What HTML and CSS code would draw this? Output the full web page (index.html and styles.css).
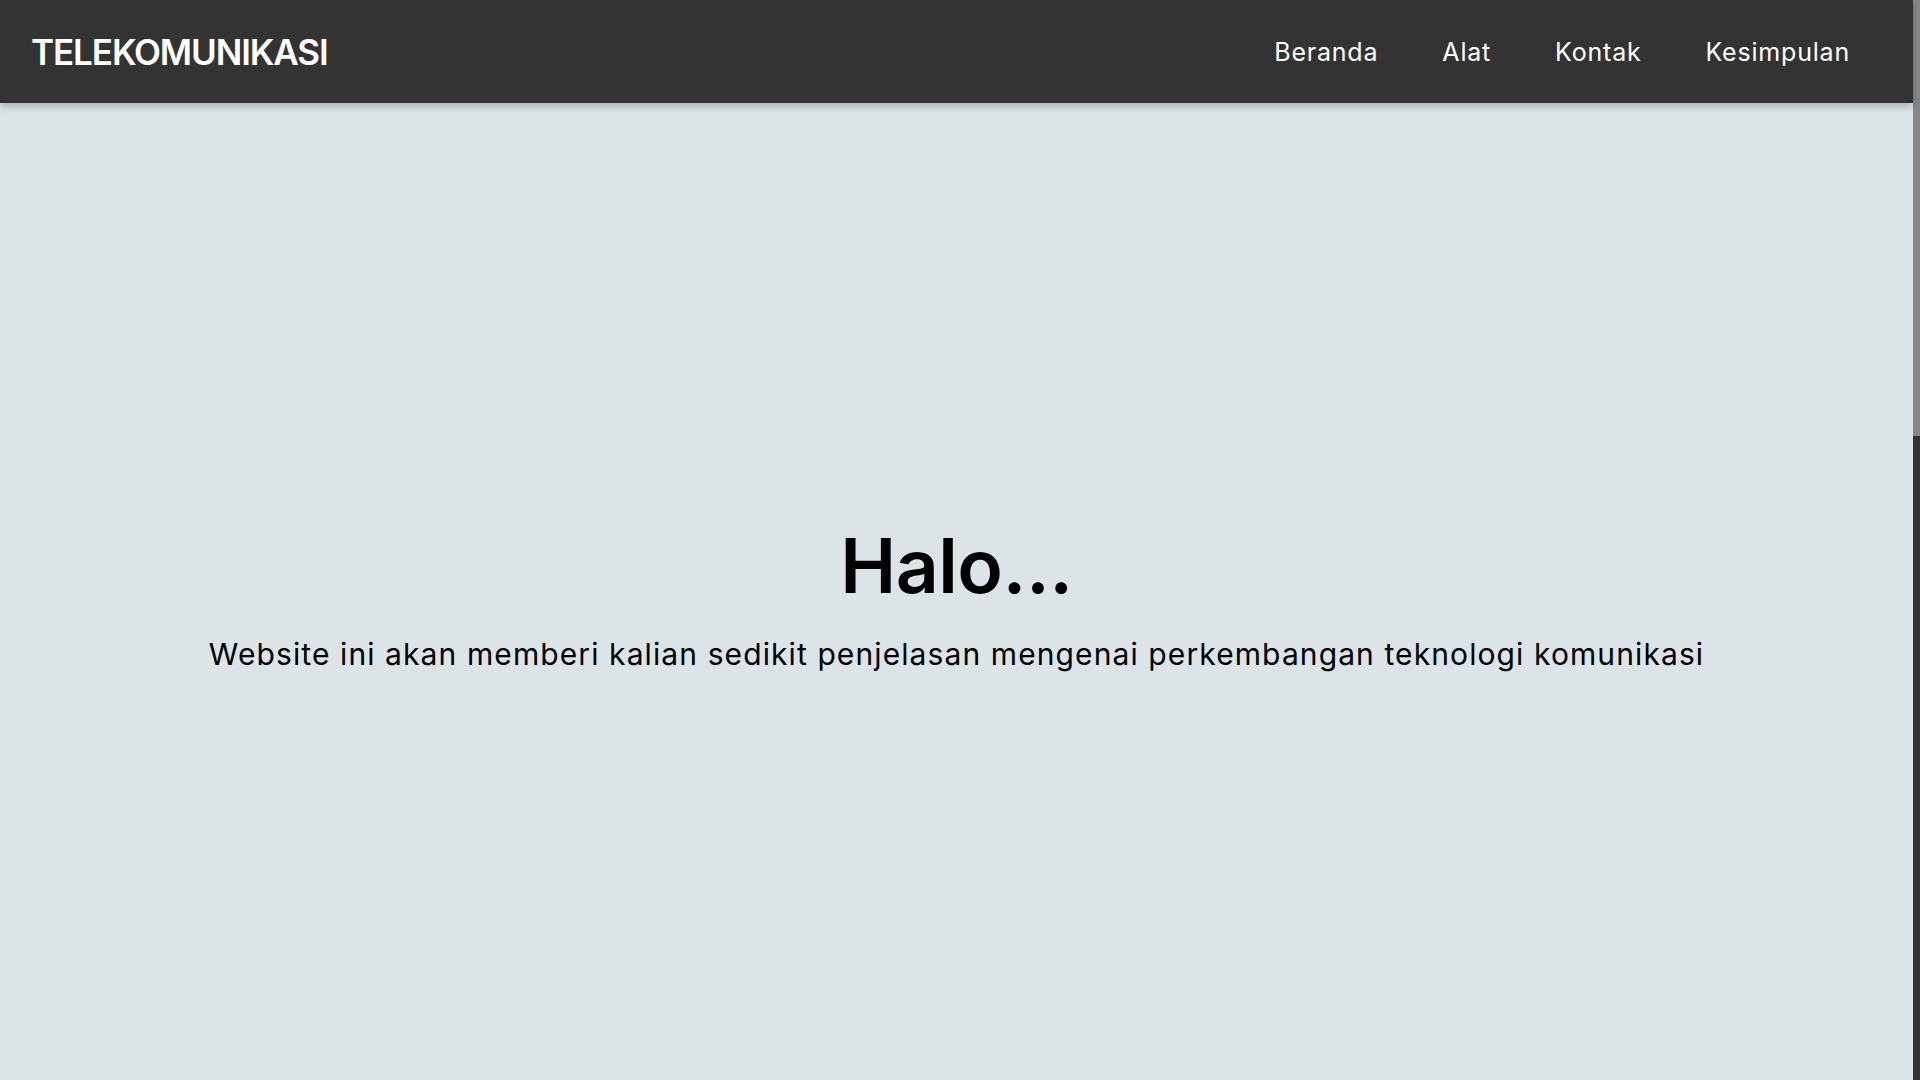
FILE: index.html
```html
<!DOCTYPE html>
<html lang="id">
<head>
<meta charset="utf-8">
<title>Telekomunikasi</title>
<link rel="stylesheet" href="styles.css">
</head>
<body>
<div class="page">
  <header class="navbar">
    <div class="logo">TELEKOMUNIKASI</div>
    <nav class="menu">
      <a href="#beranda">Beranda</a>
      <a href="#alat">Alat</a>
      <a href="#kontak">Kontak</a>
      <a href="#kesimpulan">Kesimpulan</a>
    </nav>
  </header>
  <main class="content">
    <section class="hero" id="beranda">
      <h1 class="hero-title">Halo...</h1>
      <p class="hero-text">Website ini akan memberi kalian sedikit penjelasan mengenai perkembangan teknologi komunikasi</p>
    </section>
  </main>
</div>
<div class="scrollbar"><div class="scrollbar-thumb"></div></div>
</body>
</html>
```
FILE: styles.css
```css
html, body {
  margin: 0;
  padding: 0;
  height: 100%;
  overflow: hidden;
}
body {
  background: #dce4e7;
  font-family: "Inter", "Open Sans", sans-serif;
  color: #000;
  display: flex;
}
.page {
  flex: 1;
  min-width: 0;
  height: 100%;
  display: flex;
  flex-direction: column;
}
.scrollbar {
  width: 7px;
  height: 100%;
  background: #333;
  flex-shrink: 0;
}
.scrollbar-thumb {
  height: 436px;
  background: #888;
}
.navbar {
  position: relative;
  z-index: 10;
  height: 103px;
  flex-shrink: 0;
  background: #333;
  display: flex;
  align-items: center;
  justify-content: space-between;
  padding: 0 63px 0 31px;
  box-shadow: 0 3px 8px rgba(0,0,0,0.25);
  box-sizing: border-box;
}
.logo {
  color: #fff;
  font-size: 35px;
  font-weight: 600;
  letter-spacing: -1.1px;
}
.menu {
  display: flex;
  gap: 64px;
}
.menu a {
  color: #fff;
  text-decoration: none;
  font-size: 25px;
  font-weight: 400;
  letter-spacing: 0.8px;
}
.content {
  flex: 1;
  display: flex;
  flex-direction: column;
}
.hero {
  flex: 1;
  display: flex;
  flex-direction: column;
  align-items: center;
  justify-content: center;
  text-align: center;
  padding-top: 12px;
}
.hero-title {
  margin: 0;
  font-size: 75px;
  font-weight: 600;
  letter-spacing: -0.5px;
  line-height: 1.2;
}
.hero-text {
  margin: 22px 0 0;
  font-size: 30px;
  letter-spacing: 1.1px;
  line-height: 1.4;
}
```
